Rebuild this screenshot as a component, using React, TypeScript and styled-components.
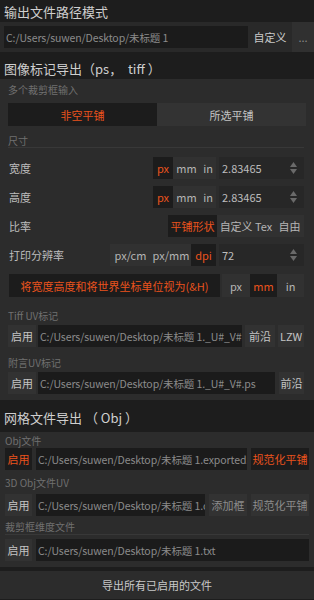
import React from 'react';
import styled, { createGlobalStyle } from 'styled-components';

const ORANGE = '#ea531d';

const Global = createGlobalStyle`
  html, body { margin: 0; padding: 0; background: #1d1d1d; }
  body {
    font-family: "Noto Sans CJK SC", "Noto Sans", sans-serif;
    width: 314px; height: 600px; overflow: hidden;
  }
  * { box-sizing: border-box; }
`;

const Page = styled.div`
  display: flex;
  flex-direction: column;
  width: 314px;
  height: 600px;
  background: #1d1d1d;
`;

const SectionTitle = styled.div<{ $h: number; $pt?: number }>`
  height: ${p => p.$h}px;
  padding-top: ${p => p.$pt ?? 0}px;
  display: flex;
  align-items: center;
  padding-left: 4px;
  font-size: 13px;
  color: #cfcfcf;
  white-space: pre;
  text-spacing-trim: space-all;
`;

const PathBand = styled.div`
  height: 30px;
  background: #292929;
  display: flex;
  align-items: stretch;
  padding: 4px 0 4px 4px;
`;

const BandButton = styled.div<{ $w: number; $light?: boolean; $dim?: boolean }>`
  width: ${p => p.$w}px;
  margin-top: -4px;
  margin-bottom: -4px;
  display: flex;
  align-items: center;
  justify-content: center;
  font-size: 11px;
  color: ${p => (p.$dim ? '#8a8a8a' : '#cacaca')};
  background: ${p => (p.$light ? '#303030' : 'transparent')};
`;

const Panel = styled.div<{ $pl: number; $pr: number; $pb: number }>`
  background: #2c2c2c;
  display: flex;
  flex-direction: column;
  padding: 0 ${p => p.$pr}px ${p => p.$pb}px ${p => p.$pl}px;
`;

const SubLabel = styled.div<{ $h: number; $mt?: number; $line?: boolean; $pt?: number }>`
  height: ${p => p.$h}px;
  margin-top: ${p => p.$mt ?? 0}px;
  padding-top: ${p => p.$pt ?? 0}px;
  display: flex;
  align-items: center;
  font-size: 10px;
  color: #707070;
  white-space: nowrap;
  border-bottom: ${p => (p.$line ? '1px solid #383838' : 'none')};
`;

const Segmented = styled.div`
  display: flex;
  height: 23px;
  margin-top: 4px;
  margin-right: -2px;
`;

const SegItem = styled.div<{ $active?: boolean }>`
  flex: 1;
  display: flex;
  align-items: center;
  justify-content: center;
  font-size: 11px;
  background: ${p => (p.$active ? '#1c1c1c' : '#333333')};
  color: ${p => (p.$active ? ORANGE : '#c4c4c4')};
`;

const Row = styled.div<{ $mt: number; $h?: number }>`
  display: flex;
  align-items: stretch;
  height: ${p => p.$h ?? 22}px;
  margin-top: ${p => p.$mt}px;
`;

const Label = styled.div`
  flex: 1;
  display: flex;
  align-items: center;
  padding-left: 1px;
  font-size: 11px;
  color: #bdbdbd;
  white-space: nowrap;
`;

const UnitGroup = styled.div<{ $grow?: boolean; $ml?: number }>`
  display: flex;
  background: #313131;
  flex: ${p => (p.$grow ? 1 : '0 0 auto')};
  margin-left: ${p => p.$ml ?? 0}px;
`;

const Unit = styled.div<{ $active?: boolean; $w: number }>`
  width: ${p => p.$w}px;
  display: flex;
  align-items: center;
  justify-content: center;
  font-size: 11px;
  white-space: pre;
  background: ${p => (p.$active ? '#1c1c1c' : 'transparent')};
  color: ${p => (p.$active ? ORANGE : '#b5b5b5')};
`;

const NumberField = styled.div`
  width: 85px;
  margin-left: 3px;
  background: #272727;
  display: flex;
  align-items: center;
  justify-content: space-between;
  padding: 0 7px 0 3px;
  font-size: 11px;
  color: #bdbdbd;
`;

const Spinner = styled.div`
  display: flex;
  flex-direction: column;
  gap: 2px;
  align-items: center;
`;

const WideButton = styled.div<{ $w: number }>`
  width: ${p => p.$w}px;
  background: #1c1c1c;
  display: flex;
  align-items: center;
  justify-content: center;
  font-size: 11px;
  color: ${ORANGE};
  white-space: nowrap;
  margin-left: 1px;
`;

const Btn = styled.div<{ $w: number; $active?: boolean; $dim?: boolean; $ml?: number }>`
  width: ${p => p.$w}px;
  flex-shrink: 0;
  margin-left: ${p => p.$ml ?? 0}px;
  display: flex;
  align-items: center;
  justify-content: center;
  font-size: 11px;
  white-space: nowrap;
  overflow: hidden;
  background: ${p => (p.$active ? '#1c1c1c' : '#323232')};
  color: ${p => (p.$active ? ORANGE : p.$dim ? '#8c8c8c' : '#c4c4c4')};
`;

const PathField = styled.div<{ $ml?: number; $w?: number }>`
  ${p => (p.$w ? `width: ${p.$w}px; flex-shrink: 0;` : 'flex: 1; min-width: 0;')}
  margin-left: ${p => p.$ml ?? 0}px;
  background: #1b1b1b;
  display: flex;
  align-items: center;
  padding-left: 2px;
  font-size: 10.5px;
  letter-spacing: -0.1px;
  color: #8b8b8b;
  white-space: nowrap;
  overflow: hidden;
`;

const ExportButton = styled.div`
  height: 28px;
  margin-top: 4px;
  background: #2c2c2c;
  display: flex;
  align-items: center;
  justify-content: center;
  font-size: 11px;
  color: #c8c8c8;
`;

const SpinArrows = () => (
  <Spinner>
    <svg width="7" height="5" viewBox="0 0 7 5">
      <path d="M3.5 0 L7 5 L0 5 Z" fill="#6a6a6a" />
    </svg>
    <svg width="7" height="5" viewBox="0 0 7 5">
      <path d="M0 0 L7 0 L3.5 5 Z" fill="#6a6a6a" />
    </svg>
  </Spinner>
);

const BASE = 'C:/Users/suwen/Desktop/未标题 1';

export default function App() {
  return (
    <Page>
      <Global />
      <SectionTitle $h={22}>输出文件路径模式</SectionTitle>
      <PathBand>
        <PathField $w={244}>{BASE}</PathField>
        <BandButton $w={44}>自定义</BandButton>
        <BandButton $w={22} $light $dim>...</BandButton>
      </PathBand>

      <SectionTitle $h={27} $pt={5}>图像标记导出（ps，  tiff ）</SectionTitle>
      <Panel $pl={8} $pr={10} $pb={6}>
        <SubLabel $h={20}>多个裁剪框输入</SubLabel>
        <Segmented>
          <SegItem $active>非空平铺</SegItem>
          <SegItem>所选平铺</SegItem>
        </Segmented>
        <SubLabel $h={20} $mt={2} $pt={5} $line>尺寸</SubLabel>

        <Row $mt={9}>
          <Label>宽度</Label>
          <UnitGroup>
            <Unit $w={20} $active>px</Unit>
            <Unit $w={27}>mm</Unit>
            <Unit $w={16}>in</Unit>
          </UnitGroup>
          <NumberField>
            2.83465
            <SpinArrows />
          </NumberField>
        </Row>

        <Row $mt={7}>
          <Label>高度</Label>
          <UnitGroup>
            <Unit $w={20} $active>px</Unit>
            <Unit $w={27}>mm</Unit>
            <Unit $w={16}>in</Unit>
          </UnitGroup>
          <NumberField>
            2.83465
            <SpinArrows />
          </NumberField>
        </Row>

        <Row $mt={7}>
          <Label>比率</Label>
          <UnitGroup>
            <Unit $w={49} $active>平铺形状</Unit>
            <Unit $w={58}>自定义 Tex</Unit>
            <Unit $w={29}>自由</Unit>
          </UnitGroup>
        </Row>

        <Row $mt={7}>
          <Label>打印分辨率</Label>
          <UnitGroup>
            <Unit $w={41}>px/cm</Unit>
            <Unit $w={40}>px/mm</Unit>
            <Unit $w={25} $active>dpi</Unit>
          </UnitGroup>
          <NumberField>
            72
            <SpinArrows />
          </NumberField>
        </Row>

        <Row $mt={8} $h={23}>
          <WideButton $w={211}>将宽度高度和将世界坐标单位视为(&amp;H)</WideButton>
          <UnitGroup $ml={2} $grow>
            <Unit $w={28}>px</Unit>
            <Unit $w={27} $active>mm</Unit>
            <Unit $w={27}>in</Unit>
          </UnitGroup>
        </Row>

        <SubLabel $h={20} $mt={8}>Tiff UV标记</SubLabel>
        <Row $mt={0}>
          <Btn $w={28}>启用</Btn>
          <PathField $ml={2}>{BASE}._U#_V#.tif</PathField>
          <Btn $w={30} $ml={3}>前沿</Btn>
          <Btn $w={26} $ml={3}>LZW</Btn>
        </Row>

        <SubLabel $h={20} $mt={5}>附言UV标记</SubLabel>
        <Row $mt={0}>
          <Btn $w={28}>启用</Btn>
          <PathField $ml={2}>{BASE}._U#_V#.ps</PathField>
          <Btn $w={25} $ml={4}>前沿</Btn>
        </Row>
      </Panel>

      <SectionTitle $h={32} $pt={2}>网格文件导出 （ Obj ）</SectionTitle>
      <Panel $pl={5} $pr={5} $pb={6}>
        <SubLabel $h={16}>Obj文件</SubLabel>
        <Row $mt={0}>
          <Btn $w={27} $active>启用</Btn>
          <PathField $ml={4}>{BASE}.exported.obj</PathField>
          <Btn $w={58} $ml={4} $active>规范化平铺</Btn>
        </Row>

        <SubLabel $h={16} $mt={4}>3D Obj文件UV</SubLabel>
        <Row $mt={4}>
          <Btn $w={27}>启用</Btn>
          <PathField $ml={4}>{BASE}.obj</PathField>
          <Btn $w={38} $ml={4} $dim>添加框</Btn>
          <Btn $w={58} $ml={4} $dim>规范化平铺</Btn>
        </Row>

        <SubLabel $h={16} $mt={3} $line>裁剪框维度文件</SubLabel>
        <Row $mt={4}>
          <Btn $w={27}>启用</Btn>
          <PathField $ml={4}>{BASE}.txt</PathField>
        </Row>
      </Panel>

      <ExportButton>导出所有已启用的文件</ExportButton>
    </Page>
  );
}
